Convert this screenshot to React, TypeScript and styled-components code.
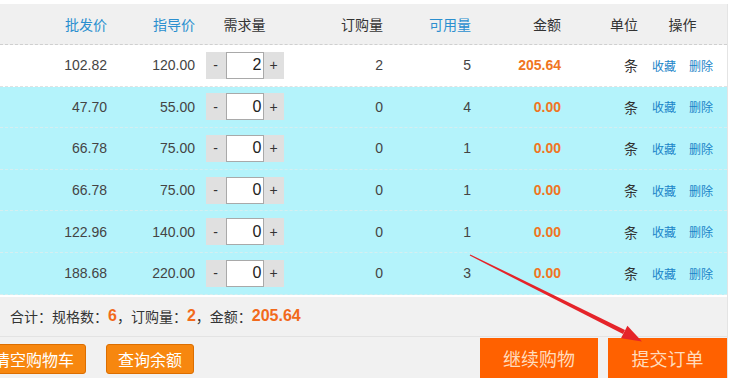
import styled, { createGlobalStyle } from 'styled-components';

const GlobalStyle = createGlobalStyle`
  html, body {
    margin: 0;
    padding: 0;
    background: #fff;
  }
  body {
    font-family: "Liberation Sans", Arial, "Noto Sans CJK SC", sans-serif;
    color: #333;
    overflow: hidden;
  }
`;

const COLS = '107px 88px 99px 89px 88px 90px 77px 89px';

const Page = styled.div`
  position: relative;
  width: 750px;
  height: 378px;
  overflow: hidden;
  padding-top: 4px;
  box-sizing: border-box;
`;

const Panel = styled.div`
  width: 728px;
  box-sizing: border-box;
  border-right: 1px solid #e4e4e4;
  background: #fff;
`;

const HeaderRow = styled.div`
  display: grid;
  grid-template-columns: ${COLS};
  height: 41px;
  box-sizing: border-box;
  background: #f0f0f0;
  border-bottom: 1px dashed #cfcfcf;
`;

const Row = styled.div<{ $tone: 'white' | 'cyan' }>`
  display: grid;
  grid-template-columns: ${COLS};
  height: 41.6px;
  box-sizing: border-box;
  background: ${(p) => (p.$tone === 'cyan' ? '#b4f3fb' : '#fff')};
  border-bottom: 1px dashed ${(p) => (p.$tone === 'cyan' ? '#d6eef0' : '#e2e2e2')};
`;

const Cell = styled.div<{ $align?: 'right' | 'center' }>`
  display: flex;
  align-items: center;
  justify-content: ${(p) => (p.$align === 'center' ? 'center' : 'flex-end')};
  font-size: 14px;
  color: #444;
  white-space: nowrap;
`;

const HeadText = styled.span<{ $blue?: boolean }>`
  font-family: "Noto Sans CJK SC", sans-serif;
  font-size: 14px;
  color: ${(p) => (p.$blue ? '#2b8fcf' : '#333')};
`;

const Amount = styled.span`
  font-weight: bold;
  color: #f07522;
`;

const Unit = styled.span`
  font-family: "Noto Sans CJK SC", sans-serif;
  font-size: 14px;
  color: #333;
`;

const Links = styled.div`
  display: flex;
  gap: 13px;
`;

const ActionLink = styled.a`
  font-family: "Noto Sans CJK SC", sans-serif;
  font-size: 12px;
  color: #1a84c8;
  text-decoration: none;
`;

const Stepper = styled.div`
  display: flex;
  height: 27px;
`;

const StepBtn = styled.span`
  width: 20px;
  display: flex;
  align-items: center;
  justify-content: center;
  background: #e0e0e0;
  color: #333;
  font-size: 14px;
`;

const QtyInput = styled.input`
  width: 38px;
  height: 27px;
  box-sizing: border-box;
  border: 1px solid #a9a9a9;
  padding: 0 1px 0 0;
  margin: 0;
  text-align: right;
  font-family: "Liberation Sans", Arial, sans-serif;
  font-size: 16px;
  color: #222;
  background: #fff;
  outline: none;
`;

const Footer = styled.div`
  margin-top: 2px;
  background: #f1f1f1;
`;

const Summary = styled.div`
  height: 40px;
  box-sizing: border-box;
  display: flex;
  align-items: center;
  padding-left: 10px;
  border-bottom: 1px solid #e3e3e3;
  font-family: "Noto Sans CJK SC", sans-serif;
  font-size: 14px;
  color: #333;
`;

const Strong = styled.b`
  font-family: "Liberation Sans", Arial, sans-serif;
  font-size: 16px;
  color: #f26a1b;
`;

const Actions = styled.div`
  display: flex;
  justify-content: space-between;
  height: 41px;
`;

const LeftGroup = styled.div`
  display: flex;
  gap: 20px;
  margin-top: 7px;
  margin-left: -18px;
`;

const SmallButton = styled.button`
  height: 30px;
  padding: 0 11px;
  border: 1px solid #dc6e00;
  border-radius: 3px;
  background: #f7870f;
  color: #fff;
  font-family: "Noto Sans CJK SC", sans-serif;
  font-size: 16px;
  line-height: 28px;
`;

const RightGroup = styled.div`
  display: flex;
  gap: 10px;
  margin-top: 1px;
`;

const BigButton = styled.button<{ $w: number }>`
  width: ${(p) => p.$w}px;
  height: 40px;
  border: none;
  background: #ff6100;
  color: #ffdcbd;
  font-family: "Noto Sans CJK SC", sans-serif;
  font-size: 18px;
  padding: 0;
`;

const Overlay = styled.svg`
  position: absolute;
  left: 0;
  top: 0;
  pointer-events: none;
`;

interface Item {
  price: string;
  guide: string;
  qty: number;
  ordered: number;
  avail: number;
  amount: string;
}

const items: Item[] = [
  { price: '102.82', guide: '120.00', qty: 2, ordered: 2, avail: 5, amount: '205.64' },
  { price: '47.70', guide: '55.00', qty: 0, ordered: 0, avail: 4, amount: '0.00' },
  { price: '66.78', guide: '75.00', qty: 0, ordered: 0, avail: 1, amount: '0.00' },
  { price: '66.78', guide: '75.00', qty: 0, ordered: 0, avail: 1, amount: '0.00' },
  { price: '122.96', guide: '140.00', qty: 0, ordered: 0, avail: 1, amount: '0.00' },
  { price: '188.68', guide: '220.00', qty: 0, ordered: 0, avail: 3, amount: '0.00' },
];

function App() {
  return (
    <Page>
      <GlobalStyle />
      <Panel>
        <HeaderRow>
          <Cell><HeadText $blue>批发价</HeadText></Cell>
          <Cell><HeadText $blue>指导价</HeadText></Cell>
          <Cell $align="center"><HeadText>需求量</HeadText></Cell>
          <Cell><HeadText>订购量</HeadText></Cell>
          <Cell><HeadText $blue>可用量</HeadText></Cell>
          <Cell><HeadText>金额</HeadText></Cell>
          <Cell><HeadText>单位</HeadText></Cell>
          <Cell $align="center"><HeadText>操作</HeadText></Cell>
        </HeaderRow>
        {items.map((it, i) => (
          <Row key={i} $tone={i === 0 ? 'white' : 'cyan'}>
            <Cell>{it.price}</Cell>
            <Cell>{it.guide}</Cell>
            <Cell $align="center">
              <Stepper>
                <StepBtn>-</StepBtn>
                <QtyInput value={it.qty} readOnly />
                <StepBtn>+</StepBtn>
              </Stepper>
            </Cell>
            <Cell>{it.ordered}</Cell>
            <Cell>{it.avail}</Cell>
            <Cell><Amount>{it.amount}</Amount></Cell>
            <Cell><Unit>条</Unit></Cell>
            <Cell $align="center">
              <Links>
                <ActionLink href="#">收藏</ActionLink>
                <ActionLink href="#">删除</ActionLink>
              </Links>
            </Cell>
          </Row>
        ))}
        <Footer>
          <Summary>
            合计：规格数：<Strong>6</Strong>，订购量：<Strong>2</Strong>，金额：<Strong>205.64</Strong>
          </Summary>
          <Actions>
            <LeftGroup>
              <SmallButton>清空购物车</SmallButton>
              <SmallButton>查询余额</SmallButton>
            </LeftGroup>
            <RightGroup>
              <BigButton $w={118}>继续购物</BigButton>
              <BigButton $w={119}>提交订单</BigButton>
            </RightGroup>
          </Actions>
        </Footer>
      </Panel>
      <Overlay width="750" height="378" viewBox="0 0 750 378">
        <polygon points="470.3,254.4 469.7,255.6 623,334 625,330" fill="#e5242a" />
        <polygon points="642,341.5 627.4,325.8 621,338.2" fill="#e5242a" />
      </Overlay>
    </Page>
  );
}

export default App;
